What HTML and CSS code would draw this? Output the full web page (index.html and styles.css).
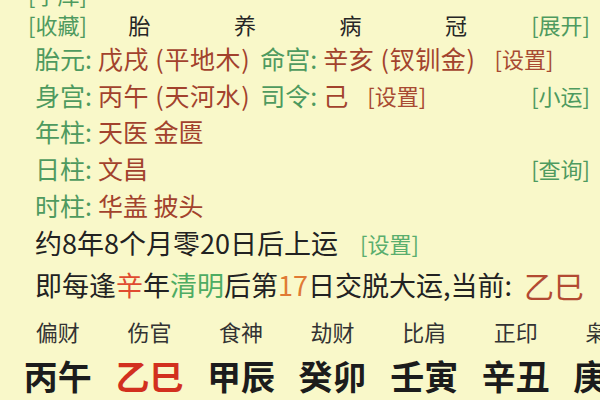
FILE: index.html
```html
<!DOCTYPE html>
<html lang="zh-CN">
<head>
  <meta charset="UTF-8">
  <meta name="viewport" content="width=device-width, initial-scale=1.0">
  <title>排盘</title>
  <link rel="stylesheet" href="styles.css">
</head>
<body>
  <div class="panel">
    <div class="row top-cut">
      <span class="link">[字库]</span>
    </div>

    <div class="row stages">
      <span class="link">[收藏]</span>
      <span class="stage">胎</span>
      <span class="stage">养</span>
      <span class="stage">病</span>
      <span class="stage">冠</span>
      <span class="link right">[展开]</span>
    </div>

    <div class="info">
      <div class="line">
        <span class="key">胎元:</span>
        <span class="val wide">戊戌 (平地木)</span>
        <span class="key">命宫:</span>
        <span class="val wide">辛亥 (钗钏金)</span>
        <span class="act">[设置]</span>
      </div>
      <div class="line">
        <span class="key">身宫:</span>
        <span class="val wide">丙午 (天河水)</span>
        <span class="key">司令:</span>
        <span class="val">己</span>
        <span class="act">[设置]</span>
        <span class="link push">[小运]</span>
      </div>
      <div class="line">
        <span class="key">年柱:</span>
        <span class="val">天医 金匮</span>
      </div>
      <div class="line">
        <span class="key">日柱:</span>
        <span class="val">文昌</span>
        <span class="link push">[查询]</span>
      </div>
      <div class="line">
        <span class="key">时柱:</span>
        <span class="val">华盖 披头</span>
      </div>

      <div class="line start">
        <span>约8年8个月零20日后上运</span>
        <span class="small-link">[设置]</span>
      </div>
      <div class="line handover">
        <span>即每逢<em class="hot">辛</em>年<em class="term">清明</em>后第<em class="num">17</em>日交脱大运,当前:</span>
        <span class="current">乙巳</span>
      </div>
    </div>

    <div class="luck">
      <div class="cell"><span class="god">偏财</span><span class="pillar">丙午</span></div>
      <div class="cell"><span class="god">伤官</span><span class="pillar now">乙巳</span></div>
      <div class="cell"><span class="god">食神</span><span class="pillar">甲辰</span></div>
      <div class="cell"><span class="god">劫财</span><span class="pillar">癸卯</span></div>
      <div class="cell"><span class="god">比肩</span><span class="pillar">壬寅</span></div>
      <div class="cell"><span class="god">正印</span><span class="pillar">辛丑</span></div>
      <div class="cell"><span class="god">枭神</span><span class="pillar">庚子</span></div>
    </div>
  </div>
</body>
</html>
```

FILE: styles.css
```css
body {
  margin: 0;
  width: 600px;
  height: 400px;
  overflow: hidden;
  background: #f9f8c9;
  font-family: "Noto Sans CJK SC", "Noto Sans", sans-serif;
  color: #222;
}

.panel {
  padding: 0 10px 0 28px;
}

.row {
  display: flex;
  align-items: center;
  font-size: 22px;
  line-height: 30px;
}

.top-cut {
  margin-top: -21px;
  height: 30px;
}

.link {
  color: #4e9a5f;
  font-size: 22px;
}

.stages {
  height: 30px;
}

.stage {
  width: 105.5px;
  text-align: center;
  color: #262626;
}

.stages .stage:first-of-type {
  margin-left: 2px;
}

.right {
  margin-left: auto;
}

.info {
  margin-top: 1px;
  padding-left: 7px;
  font-size: 25px;
}

.line {
  display: flex;
  align-items: center;
  height: 36.6px;
  gap: 6px;
}

.key {
  color: #4e9a5f;
}

.val {
  color: #a2422d;
  margin-right: 4px;
}

.val.wide {
  letter-spacing: 0.6px;
}

.act {
  font-size: 22px;
  margin-left: 9px;
  color: #a84a32;
}

.push {
  margin-left: auto;
}

.start {
  height: 40px;
  font-size: 27px;
  color: #222;
}

.small-link {
  font-size: 22px;
  color: #5aae6e;
  margin-left: 16px;
}

.handover {
  height: 44px;
  font-size: 27px;
}

.handover em {
  font-style: normal;
}

.hot {
  color: #e04b30;
}

.term {
  color: #4eac63;
}

.num {
  color: #e07a34;
}

.current {
  color: #b24a32;
  font-size: 30px;
  margin-left: 6px;
}

.luck {
  display: grid;
  grid-template-columns: repeat(7, 91.6px);
  margin: 4px 0 0 -16px;
}

.cell {
  display: flex;
  flex-direction: column;
  align-items: center;
}

.god {
  font-size: 22px;
  line-height: 40px;
  color: #333;
}

.pillar {
  font-size: 34px;
  font-weight: bold;
  line-height: 50px;
  color: #1c1c1c;
}

.pillar.now {
  color: #d2301f;
}
```
